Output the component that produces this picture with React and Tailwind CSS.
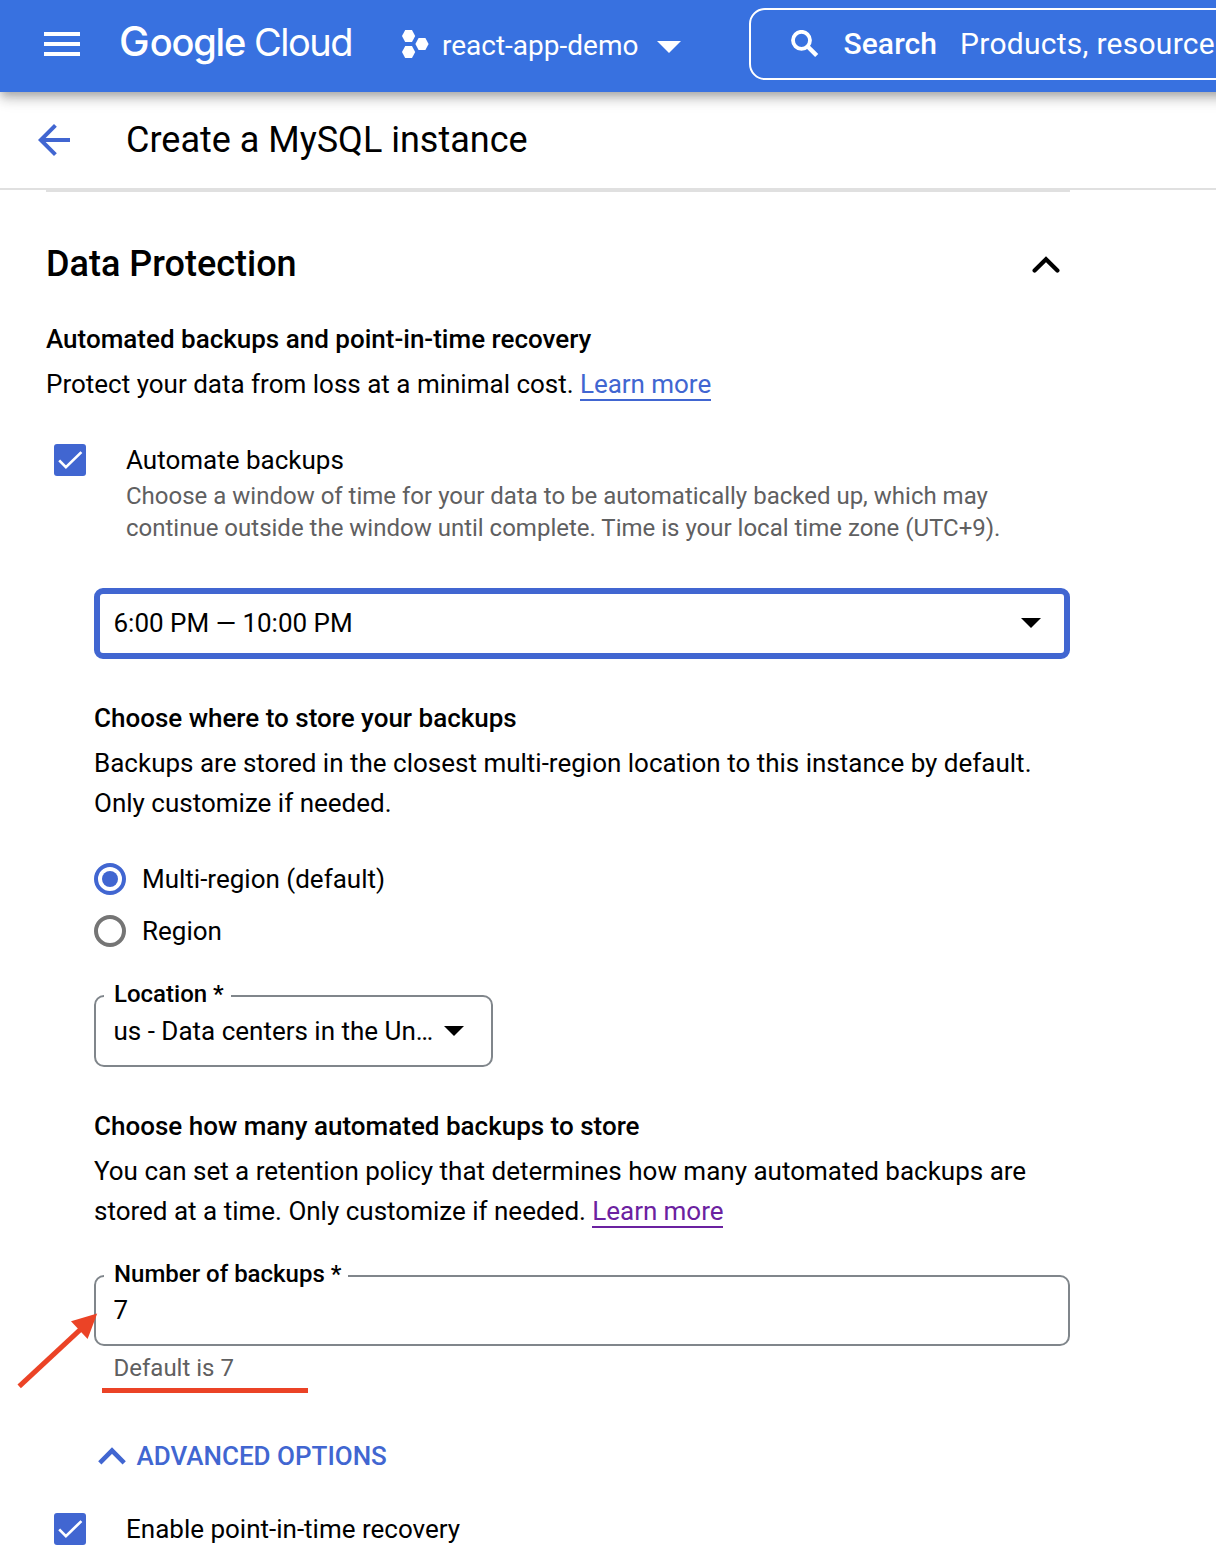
import React from "react";

function MenuIcon() {
  return (
    <svg className="size-12 shrink-0" viewBox="0 0 24 24" fill="currentColor">
      <path d="M3 18h18v-2H3v2zm0-5h18v-2H3v2zm0-7v2h18V6H3z" />
    </svg>
  );
}

function BackIcon() {
  return (
    <svg className="size-12 shrink-0 text-[#4166d1]" viewBox="0 0 24 24" fill="currentColor">
      <path d="M20 11H7.83l5.59-5.59L12 4l-8 8 8 8 1.41-1.41L7.83 13H20v-2z" />
    </svg>
  );
}

function ProjectIcon() {
  return (
    <svg className="h-7 w-[27px] shrink-0" viewBox="0 0 27 28" fill="currentColor">
      <path d="M0 6l3.2-6h6.8l3.2 6-3.2 6H3.2z" />
      <path d="M0 22l3.2-6h6.8l3.2 6-3.2 6H3.2z" />
      <path d="M13.4 14l3.2-6h6.8l3.2 6-3.2 6h-6.8z" />
    </svg>
  );
}

function SearchIcon() {
  return (
    <svg className="size-7 shrink-0" viewBox="0 0 28 28" fill="none" stroke="currentColor">
      <circle cx="10.5" cy="10.3" r="8.5" strokeWidth="3.8" />
      <path d="M16.4 16.2l9.3 9.3" strokeWidth="4.4" />
    </svg>
  );
}

function CaretDown({ className }) {
  return (
    <svg className={className} viewBox="0 0 20 10" fill="currentColor">
      <path d="M0 0h20L10 10z" />
    </svg>
  );
}

function ChevronUp({ round }) {
  return round ? (
    <svg className="mt-0.5 h-[18px] w-7 shrink-0" viewBox="0 0 28 18" fill="none" stroke="currentColor" strokeWidth="4.2" strokeLinecap="round">
      <path d="M2.6 14.6L14 3.2l11.4 11.4" />
    </svg>
  ) : (
    <svg className="h-[18px] w-7 shrink-0" viewBox="0 0 28 18" fill="none" stroke="currentColor" strokeWidth="4.6">
      <path d="M1.8 15.8L14 3.6l12.2 12.2" />
    </svg>
  );
}

function Checkbox() {
  return (
    <span className="flex size-8 shrink-0 rounded-[3px] bg-[#4166d1]">
      <svg className="size-8" viewBox="0 0 32 32" fill="none" stroke="#fff" strokeWidth="2.7">
        <path d="M5.2 16.4l6.7 6.7L27.4 8.1" />
      </svg>
    </span>
  );
}

function Radio({ label, checked }) {
  return (
    <label className="flex h-8 items-center gap-4">
      {checked ? (
        <span className="flex size-8 items-center justify-center rounded-full border-4 border-[#4166d1]">
          <span className="size-4 rounded-full bg-[#4166d1]" />
        </span>
      ) : (
        <span className="size-8 rounded-full border-4 border-[#757575]" />
      )}
      <span>{label}</span>
    </label>
  );
}

function FloatingLabel({ children }) {
  return (
    <span className="absolute -top-[19px] left-2 bg-white pr-[7px] pl-2.5 text-2xl leading-8 font-medium">
      {children}
    </span>
  );
}

function Header() {
  return (
    <header className="relative z-10 -mr-12 flex h-[92px] shrink-0 items-start bg-[#3871e0] text-white shadow-[0_4px_8px_-2px_rgba(0,0,0,0.2),0_8px_10px_0_rgba(0,0,0,0.14),0_2px_20px_0_rgba(0,0,0,0.12)]">
      <div className="mt-5 ml-[38px] flex">
        <MenuIcon />
      </div>
      <div className="mt-[18px] ml-[33px] w-[235px] shrink-0 font-['Inter',sans-serif] text-[38px] leading-[48px] whitespace-nowrap">
        <span className="text-[41px] leading-none font-medium">G</span>
        <span className="font-medium tracking-[-1.2px]">oogle</span>
        <span className="ml-[9px] font-normal tracking-[-1.5px]">Cloud</span>
      </div>
      <div className="mt-[30px] ml-[48px]">
        <ProjectIcon />
      </div>
      <div className="mt-[26px] ml-[13px] text-[28px] leading-10 whitespace-nowrap">react-app-demo</div>
      <CaretDown className="mt-[41px] ml-[19px] h-3 w-6 shrink-0" />
      <div className="mt-2 -mr-12 ml-[68px] flex h-[72px] grow items-start rounded-[16px] border-2 border-white">
        <div className="mt-5 ml-10">
          <SearchIcon />
        </div>
        <div className="mt-3.5 ml-[24px] flex gap-[23px] text-[30px] leading-10 whitespace-nowrap">
          <span className="font-medium tracking-[0.1px]">Search</span>
          <span className="tracking-[0.26px]">Products, resources</span>
        </div>
      </div>
    </header>
  );
}

export default function App() {
  return (
    <div className="flex h-[1548px] w-[1216px] flex-col overflow-hidden bg-white font-['Roboto',sans-serif] text-[26px] leading-10 text-black">
      <Header />
      <div className="flex h-[98px] shrink-0 items-center gap-12 border-b-2 border-[#e0e0e0] pl-[30px]">
        <BackIcon />
        <h1 className="text-4xl">Create a MySQL instance</h1>
      </div>

      <main className="ml-[46px] w-[1024px] shrink-0 border-t-2 border-[#e0e0e0]">
        <div className="mt-[52px] flex h-10 items-center justify-between pr-2.5">
          <h2 className="text-4xl leading-10 font-medium">Data Protection</h2>
          <ChevronUp round />
        </div>

        <h3 className="mt-[35px] font-medium">Automated backups and point-in-time recovery</h3>
        <p className="mt-[5px]">
          Protect your data from loss at a minimal cost.{" "}
          <a className="border-b-2 border-[#4166d1] tracking-[-0.05px] text-[#4166d1]">Learn more</a>
        </p>

        <div className="mt-9 flex gap-10 pl-2">
          <div className="mt-1">
            <Checkbox />
          </div>
          <div>
            <div>Automate backups</div>
            <p className="text-2xl leading-8 whitespace-nowrap text-[#5f6061]">
              Choose a window of time for your data to be automatically backed up, which may
              <br />
              continue outside the window until complete. Time is your local time zone (UTC+9).
            </p>
          </div>
        </div>

        <div className="pl-12">
          <div className="mt-11 flex h-[71px] items-center justify-between rounded-[9px] border-6 border-[#4166d1] pr-[23px] pb-0.5 pl-[13.5px]">
            <span>6:00 PM — 10:00 PM</span>
            <CaretDown className="h-2.5 w-5" />
          </div>

          <h3 className="mt-[39px] font-medium">Choose where to store your backups</h3>
          <p className="mt-[5px] whitespace-nowrap">
            Backups are stored in the closest multi-region location to this instance by default.
            <br />
            Only customize if needed.
          </p>

          <div className="mt-10 flex flex-col gap-5">
            <Radio label="Multi-region (default)" checked />
            <Radio label="Region" />
          </div>

          <div className="relative mt-12 flex h-[72px] w-[399px] items-center justify-between rounded-[10px] border-2 border-[#80868b] pr-[27px] pl-[17.5px]">
            <FloatingLabel>Location *</FloatingLabel>
            <span>us - Data centers in the Un…</span>
            <CaretDown className="h-2.5 w-5" />
          </div>

          <h3 className="mt-[39px] font-medium">Choose how many automated backups to store</h3>
          <p className="mt-[5px] whitespace-nowrap">
            You can set a retention policy that determines how many automated backups are
            <br />
            stored at a time. Only customize if needed.{" "}
            <a className="border-b-2 border-[#6b21a0] tracking-[-0.05px] text-[#6b21a0]">Learn more</a>
          </p>

          <div className="relative mt-11 h-[71px] rounded-[10px] border-2 border-[#80868b] pt-[13px] pl-[17.5px]">
            <FloatingLabel>Number of backups *</FloatingLabel>
            <span className="block">7</span>
            <svg className="absolute top-[35px] -left-[80px] h-[80px] w-[84px]" viewBox="0 0 84 80" fill="#eb4326">
              <path d="M3.2 74.3L64 17.8" stroke="#eb4326" strokeWidth="5" />
              <path d="M81.2 1.6L55 9.3 71.6 27z" />
            </svg>
          </div>
          <div className="relative mt-1.5 h-8 pl-[19.5px] text-2xl leading-8 text-[#5f6061]">
            Default is 7
            <span className="absolute top-9 left-2 h-[5px] w-[206px] bg-[#eb4326]" />
          </div>

          <div className="mt-[52px] flex items-center gap-[10.5px] pl-1 font-medium text-[#4166d1]">
            <ChevronUp />
            ADVANCED OPTIONS
          </div>
        </div>

        <div className="mt-[33px] flex items-center gap-10 pl-2">
          <Checkbox />
          <span>Enable point-in-time recovery</span>
        </div>
      </main>
    </div>
  );
}
